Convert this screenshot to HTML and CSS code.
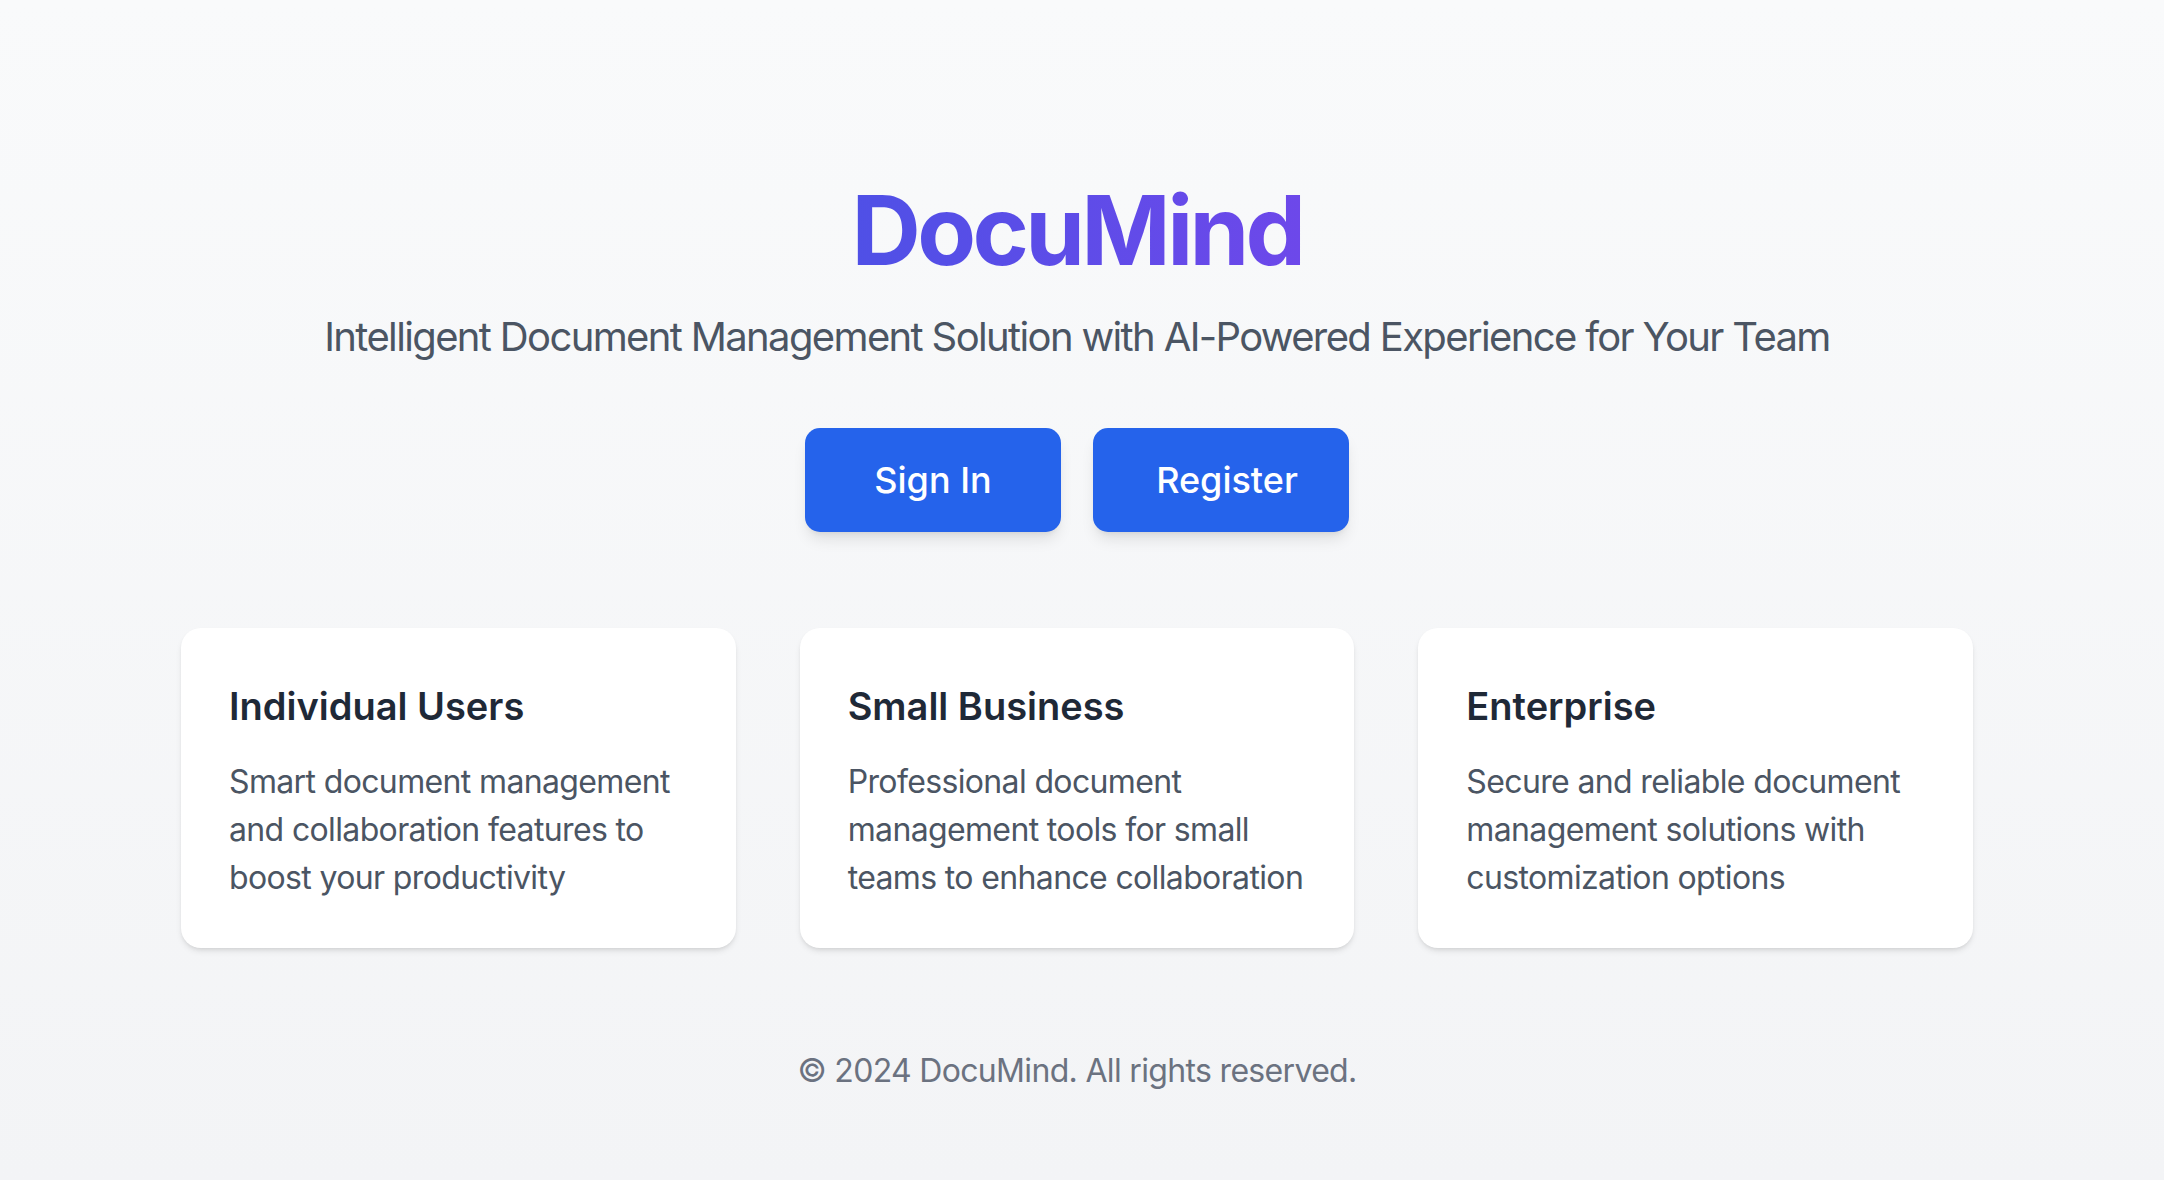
FILE: index.html
```html
<!DOCTYPE html>
<html lang="en">
<head>
<meta charset="utf-8">
<title>DocuMind</title>
<link rel="stylesheet" href="styles.css">
</head>
<body>
<div class="page">
  <header class="hero">
    <h1 class="brand">DocuMind</h1>
    <p class="tagline">Intelligent Document Management Solution with AI-Powered Experience for Your Team</p>
    <div class="actions">
      <button class="btn">Sign In</button>
      <button class="btn btn-register">Register</button>
    </div>
  </header>
  <section class="cards">
    <div class="card">
      <h2 class="card-title">Individual Users</h2>
      <p class="card-text">Smart document management and collaboration features to boost your productivity</p>
    </div>
    <div class="card">
      <h2 class="card-title">Small Business</h2>
      <p class="card-text">Professional document management tools for small teams to enhance collaboration</p>
    </div>
    <div class="card">
      <h2 class="card-title">Enterprise</h2>
      <p class="card-text">Secure and reliable document management solutions with customization options</p>
    </div>
  </section>
  <footer class="footer">© 2024 DocuMind. All rights reserved.</footer>
</div>
</body>
</html>
```
FILE: styles.css
```css
* { box-sizing: border-box; }
html, body { margin: 0; padding: 0; }
body {
  min-height: 100vh;
  background: linear-gradient(180deg, #f9fafb 0%, #f3f4f6 100%);
  font-family: Inter, "Noto Sans", sans-serif;
  color: #1f2937;
}
.page {
  padding: 182px 10px 0 0;
  display: flex;
  flex-direction: column;
  align-items: center;
}
.hero {
  display: flex;
  flex-direction: column;
  align-items: center;
}
.brand {
  margin: 0;
  font-size: 96px;
  line-height: 96px;
  font-weight: 700;
  letter-spacing: -0.038em;
  background: linear-gradient(90deg, #4f50e6, #6d48ea);
  -webkit-background-clip: text;
  background-clip: text;
  color: transparent;
}
.tagline {
  margin: 29px 0 0;
  font-size: 40px;
  line-height: 60px;
  letter-spacing: -0.041em;
  color: #4b5563;
}
.actions {
  margin-top: 61px;
  display: flex;
  gap: 32px;
}
.btn {
  width: 256px;
  height: 104px;
  padding: 0;
  border: none;
  border-radius: 15px;
  background: #2563eb;
  color: #fff;
  font-family: Inter, "Noto Sans", sans-serif;
  font-size: 36px;
  font-weight: 500;
  display: flex;
  align-items: center;
  justify-content: center;
  box-shadow: 0 10px 15px -3px rgba(0,0,0,0.1), 0 4px 6px -4px rgba(0,0,0,0.1);
}
.btn-register { padding-left: 12px; }
.cards {
  margin-top: 96px;
  width: 1792px;
  display: grid;
  grid-template-columns: repeat(3, 1fr);
  gap: 64px;
}
.card {
  background: #fff;
  border-radius: 20px;
  padding: 50px 48px 46px;
  box-shadow: 0 4px 6px -1px rgba(0,0,0,0.1), 0 2px 4px -2px rgba(0,0,0,0.1);
}
.card-title {
  margin: 0 0 24px;
  font-size: 38px;
  line-height: 56px;
  font-weight: 600;
  color: #1f2937;
}
.card-text {
  margin: 0;
  font-size: 32px;
  line-height: 48px;
  letter-spacing: -0.02em;
  color: #4b5563;
}
.footer {
  margin-top: 99px;
  font-size: 32px;
  line-height: 48px;
  letter-spacing: -0.021em;
  color: #6b7280;
}
```
